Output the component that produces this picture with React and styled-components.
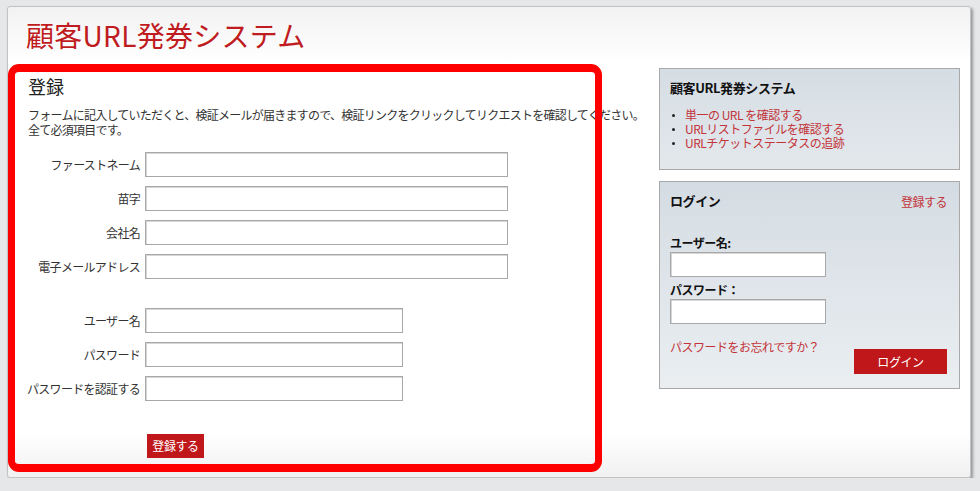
import React from "react";
import styled, { createGlobalStyle } from "styled-components";

const Global = createGlobalStyle`
  html, body { margin: 0; padding: 0; }
  body {
    background: #e6e7e9;
    font-family: "Noto Sans CJK JP", "Noto Sans", sans-serif;
    color: #333;
  }
  * { box-sizing: border-box; }
`;

const Card = styled.div`
  margin: 6px 0 0 7px;
  width: 964px;
  height: 472px;
  border: 1px solid #c2c2c2;
  border-radius: 3px;
  box-shadow: 2px 2px 3px rgba(0, 0, 0, 0.35);
  background: linear-gradient(#f2f2f2 0, #ffffff 55px, #ffffff calc(100% - 45px), #f1f1f1 100%);
`;

const Header = styled.h1`
  margin: 0;
  padding: 11px 0 12px 18px;
  height: 57px;
  font-size: 28px;
  line-height: 34px;
  font-weight: 400;
  color: #bf1b20;
  letter-spacing: 0.3px;
`;

const Main = styled.div`
  display: flex;
  align-items: flex-start;
`;

const RegisterPanel = styled.section`
  position: relative;
  flex: none;
  width: 594px;
  height: 408px;
  padding: 11px 7px 8px 7px;
  &::after {
    content: "";
    position: absolute;
    inset: 0;
    border: 7px solid #ff0000;
    border-top-width: 8px;
    border-bottom-width: 8px;
    border-radius: 11px;
    pointer-events: none;
  }
`;

const PanelTitle = styled.h2`
  margin: 0 0 10px 13px;
  font-size: 18px;
  line-height: 22px;
  font-weight: 400;
  color: #222;
`;

const Intro = styled.p`
  margin: 0 0 15px 13px;
  font-size: 12px;
  line-height: 15px;
  letter-spacing: -0.75px;
  white-space: nowrap;
  color: #333;
`;

const FormGrid = styled.div`
  display: grid;
  grid-template-columns: 125px auto;
  column-gap: 5px;
  row-gap: 9px;
  align-items: center;
  justify-content: start;
`;

const Label = styled.label`
  text-align: right;
  white-space: nowrap;
  font-size: 12px;
  letter-spacing: -0.7px;
  color: #333;
  margin-top: ${(p) => (p.$spaced ? "20px" : "0")};
`;

const TextInput = styled.input`
  width: ${(p) => p.$w}px;
  height: 25px;
  margin: ${(p) => (p.$spaced ? "20px 0 0 0" : "0")};
  border: 1px solid #a8a8a8;
  box-shadow: inset 1px 1px 0 #d6d6d6;
  background: #fff;
  padding: 0 4px;
  font: inherit;
`;

const RedButton = styled.button`
  background: #c0171b;
  color: #fff;
  border: none;
  font-family: inherit;
  font-size: 12px;
  letter-spacing: -0.4px;
  height: ${(p) => p.$h}px;
  width: ${(p) => p.$w}px;
  padding: 0;
  cursor: pointer;
`;

const SubmitRow = styled.div`
  margin: 31px 0 0 132px;
`;

const Side = styled.aside`
  margin-left: 57px;
  padding-top: 4px;
  width: 301px;
  display: flex;
  flex-direction: column;
  gap: 11px;
`;

const SideBox = styled.div`
  height: ${(p) => p.$h}px;
  border: 1px solid #a9a9a9;
  background: linear-gradient(${(p) => p.$from}, ${(p) => p.$to});
  padding: 10px 12px 0 10px;
`;

const SideTitle = styled.h3`
  margin: 0;
  font-size: 13px;
  line-height: 18px;
  font-weight: 700;
  color: #111;
  letter-spacing: -0.4px;
`;

const LinkList = styled.ul`
  list-style: none;
  margin: 11px 0 0 0;
  padding: 0;
`;

const LinkItem = styled.li`
  position: relative;
  padding-left: 15px;
  font-size: 12px;
  line-height: 14px;
  letter-spacing: -0.5px;
  &::before {
    content: "";
    position: absolute;
    left: 2px;
    top: 6px;
    width: 3px;
    height: 3px;
    border-radius: 50%;
    background: #222;
  }
`;

const RedLink = styled.a`
  color: #c3343a;
  text-decoration: none;
  font-size: 12px;
  letter-spacing: -0.5px;
`;

const TitleRow = styled.div`
  display: flex;
  justify-content: space-between;
  align-items: center;
`;

const FieldLabel = styled.div`
  margin-top: ${(p) => p.$mt}px;
  font-size: 12px;
  line-height: 14px;
  font-weight: 700;
  color: #111;
  letter-spacing: -0.5px;
`;

const SmallInput = styled(TextInput)`
  display: block;
  margin-top: 2px;
`;

const LoginFooter = styled.div`
  display: flex;
  justify-content: space-between;
  align-items: flex-start;
  margin-top: 16px;
  line-height: 14px;
`;

const LoginButton = styled(RedButton)`
  margin-top: 9px;
`;

export default function App() {
  return (
    <>
      <Global />
      <Card>
        <Header>顧客URL発券システム</Header>
        <Main>
          <RegisterPanel>
            <PanelTitle>登録</PanelTitle>
            <Intro>
              フォームに記入していただくと、検証メールが届きますので、検証リンクをクリックしてリクエストを確認してください。
              <br />
              全て必須項目です。
            </Intro>
            <FormGrid>
              <Label>ファーストネーム</Label>
              <TextInput $w={363} />
              <Label>苗字</Label>
              <TextInput $w={363} />
              <Label>会社名</Label>
              <TextInput $w={363} />
              <Label>電子メールアドレス</Label>
              <TextInput $w={363} />
              <Label $spaced>ユーザー名</Label>
              <TextInput $w={258} $spaced />
              <Label>パスワード</Label>
              <TextInput $w={258} type="password" />
              <Label>パスワードを認証する</Label>
              <TextInput $w={258} type="password" />
            </FormGrid>
            <SubmitRow>
              <RedButton $w={57} $h={24}>登録する</RedButton>
            </SubmitRow>
          </RegisterPanel>
          <Side>
            <SideBox $h={102} $from="#d5dde4" $to="#e3e8ec">
              <SideTitle>顧客URL発券システム</SideTitle>
              <LinkList>
                <LinkItem><RedLink href="#">単一の URL を確認する</RedLink></LinkItem>
                <LinkItem><RedLink href="#">URLリストファイルを確認する</RedLink></LinkItem>
                <LinkItem><RedLink href="#">URLチケットステータスの追跡</RedLink></LinkItem>
              </LinkList>
            </SideBox>
            <SideBox $h={208} $from="#d4dce3" $to="#eaeef1">
              <TitleRow>
                <SideTitle>ログイン</SideTitle>
                <RedLink href="#">登録する</RedLink>
              </TitleRow>
              <FieldLabel $mt={26}>ユーザー名:</FieldLabel>
              <SmallInput $w={156} />
              <FieldLabel $mt={6}>パスワード：</FieldLabel>
              <SmallInput $w={156} type="password" />
              <LoginFooter>
                <RedLink href="#">パスワードをお忘れですか？</RedLink>
                <LoginButton $w={93} $h={25}>ログイン</LoginButton>
              </LoginFooter>
            </SideBox>
          </Side>
        </Main>
      </Card>
    </>
  );
}
